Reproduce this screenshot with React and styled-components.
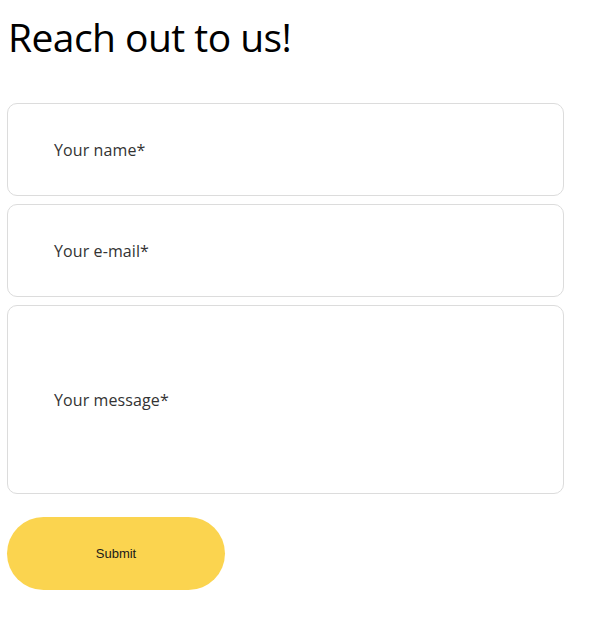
import React from "react";
import styled, { createGlobalStyle } from "styled-components";

const GlobalStyle = createGlobalStyle`
  body {
    margin: 0;
    background: #fff;
    font-family: "Open Sans", "Liberation Sans", sans-serif;
  }
`;

const Page = styled.div`
  padding: 0 7px;
  width: 557px;
`;

const Title = styled.h1`
  margin: 13px 0 42px 1px;
  font-family: "Open Sans", sans-serif;
  font-weight: 400;
  font-size: 39px;
  line-height: 48px;
  color: #000;
  letter-spacing: -0.55px;
`;

const Form = styled.form`
  display: flex;
  flex-direction: column;
  gap: 8px;
`;

const Field = styled.div`
  box-sizing: border-box;
  height: ${({ tall }) => (tall ? "189px" : "93px")};
  border: 1px solid #dcdcdc;
  border-radius: 10px;
  display: flex;
  align-items: center;
  padding-left: 46px;
  background: #fff;
`;

const Placeholder = styled.span`
  font-family: "Open Sans", sans-serif;
  font-size: 16px;
  letter-spacing: 0.1px;
  color: #333;
`;

const Submit = styled.button`
  margin-top: 23px;
  width: 218px;
  height: 73px;
  border: none;
  border-radius: 37px;
  background: #fbd44f;
  color: #1a1a1a;
  font-family: "Liberation Sans", Arial, sans-serif;
  font-size: 13px;
  cursor: pointer;
`;

export default function App() {
  return (
    <>
      <GlobalStyle />
      <Page>
        <Title>Reach out to us!</Title>
        <Form>
          <Field>
            <Placeholder>Your name*</Placeholder>
          </Field>
          <Field>
            <Placeholder>Your e-mail*</Placeholder>
          </Field>
          <Field tall>
            <Placeholder>Your message*</Placeholder>
          </Field>
        </Form>
        <Submit>Submit</Submit>
      </Page>
    </>
  );
}
